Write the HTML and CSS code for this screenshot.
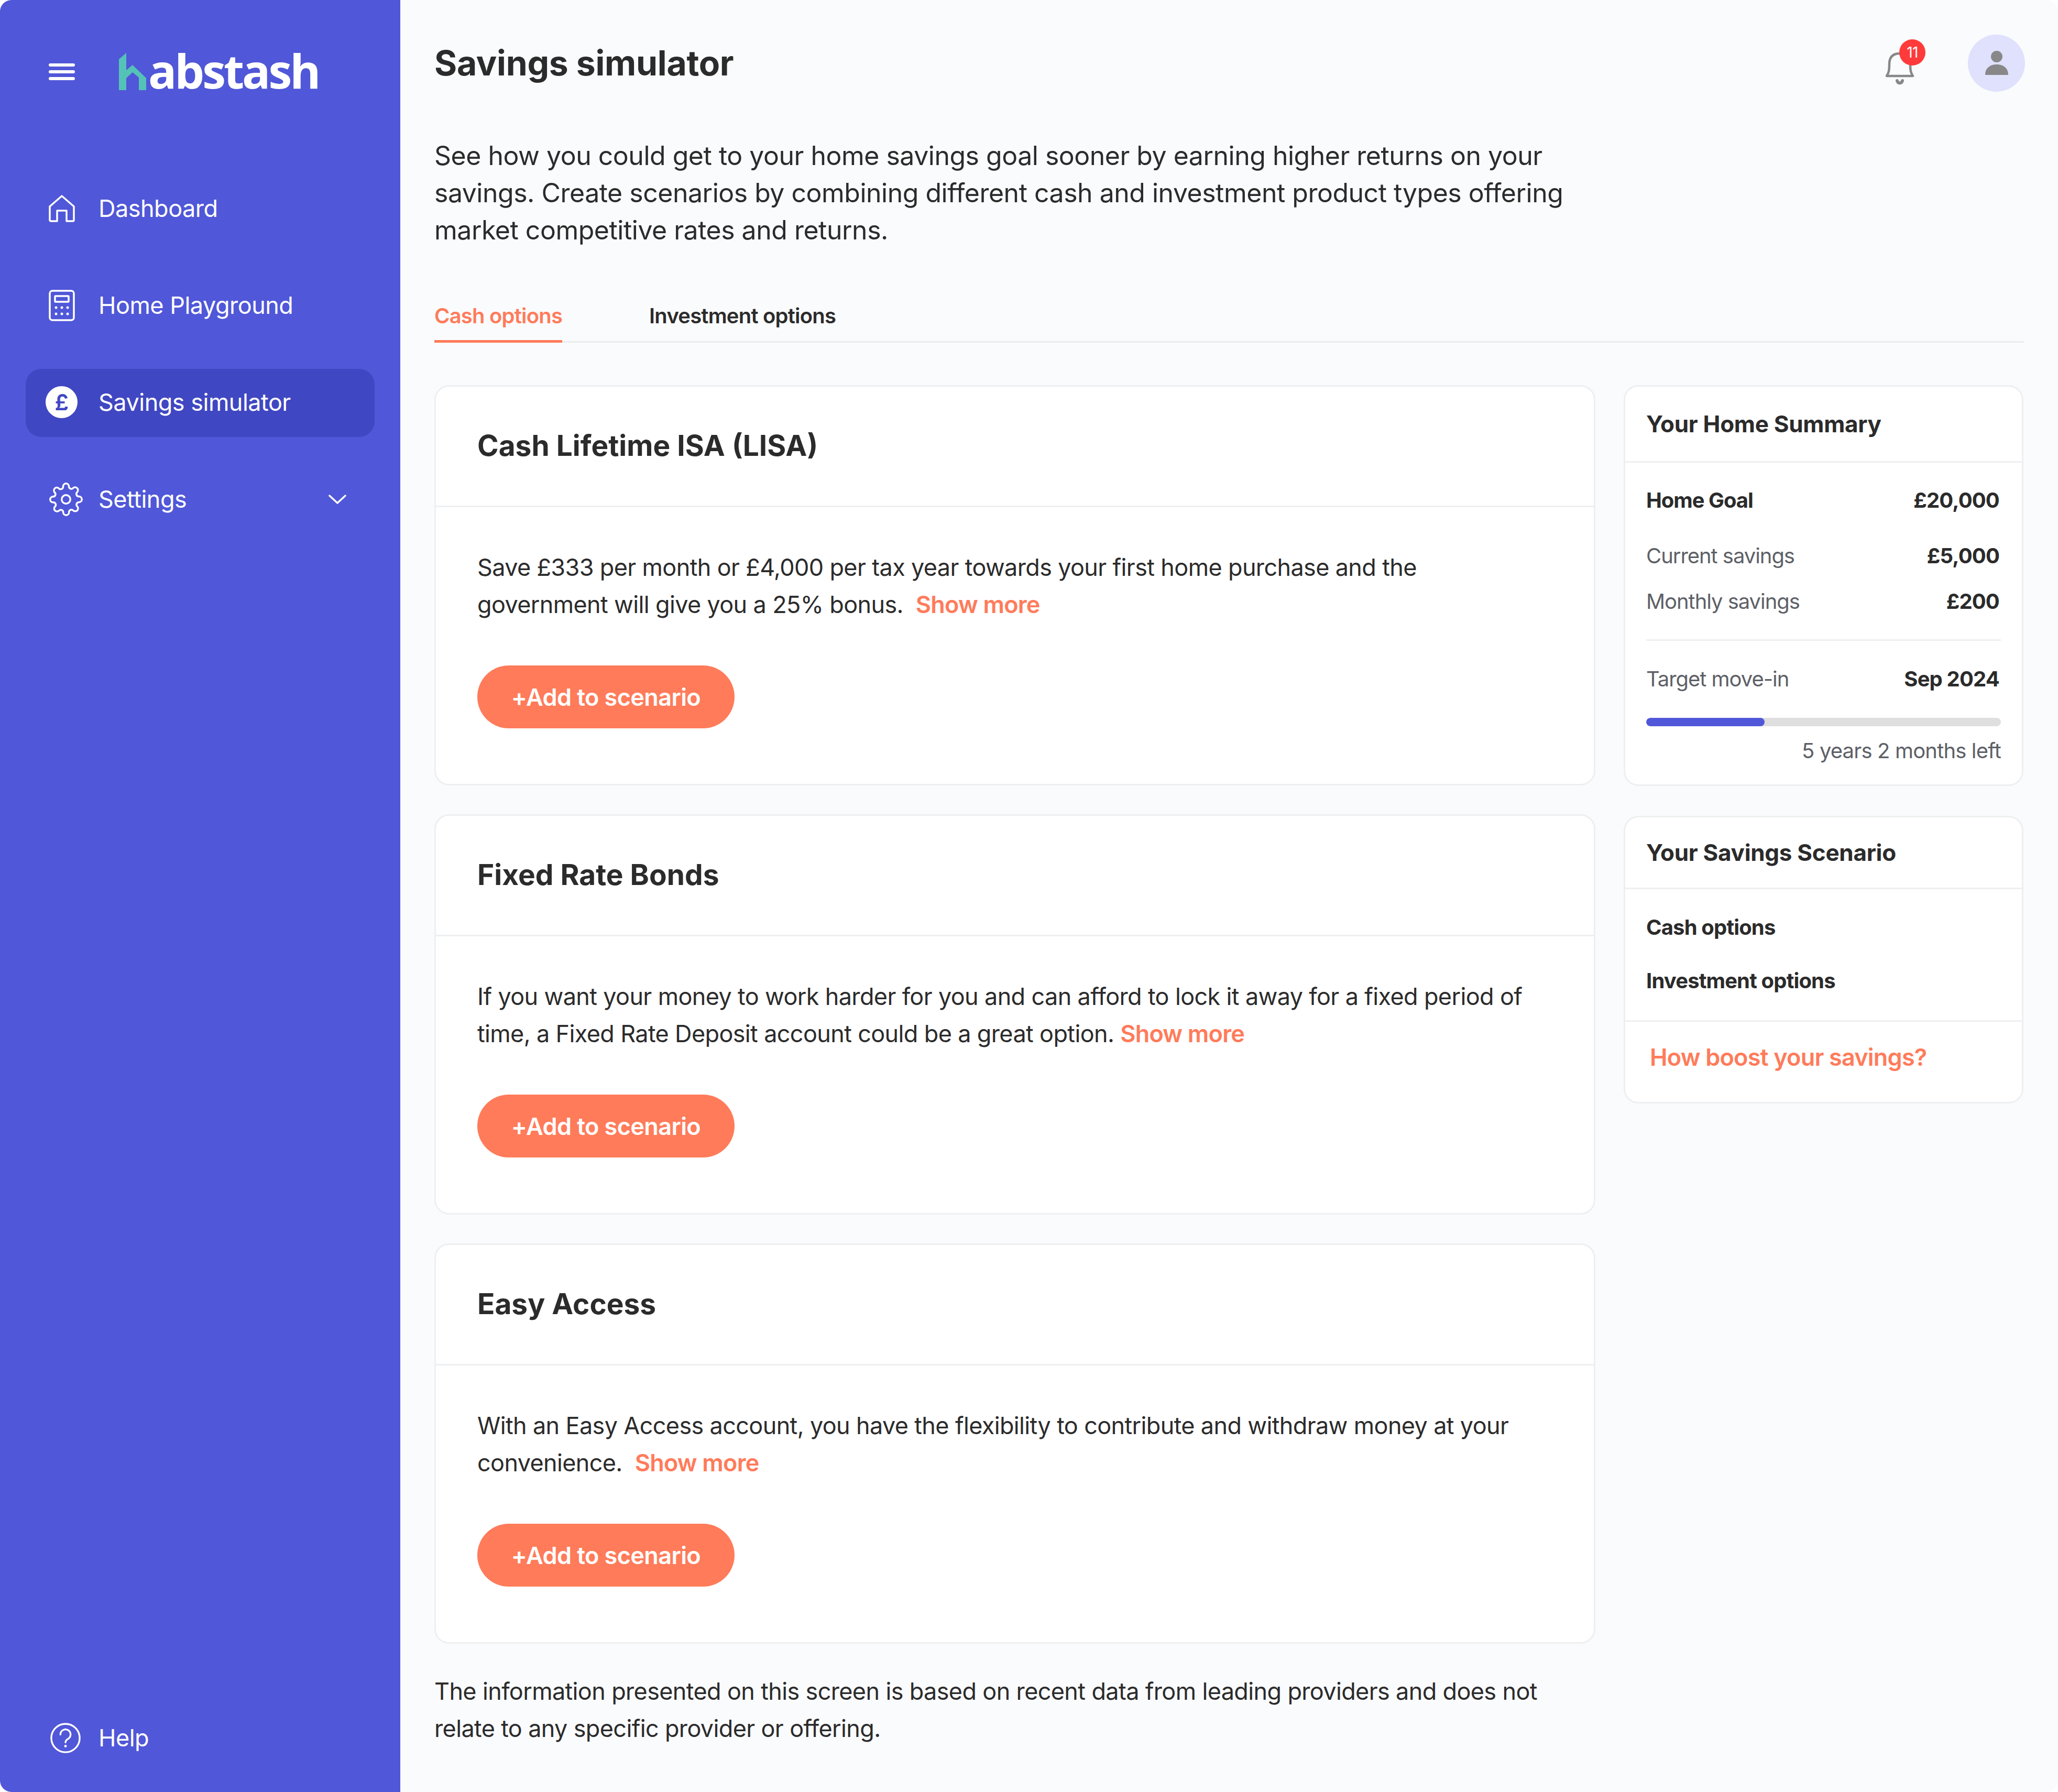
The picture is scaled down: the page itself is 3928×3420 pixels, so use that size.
FILE: index.html
```html
<!DOCTYPE html>
<html lang="en">
  <head>
    <meta charset="UTF-8" />
    <title>Savings simulator</title>
    <link rel="stylesheet" href="styles.css">
  </head>
  <body>
    <div class="app">
      <aside class="sidebar">
        <div class="brand">
          <svg class="burger" width="50" height="32" viewBox="0 0 50 32" fill="#fff">
            <rect x="0" y="0" width="50" height="6" rx="3" />
            <rect x="0" y="13" width="50" height="6" rx="3" />
            <rect x="0" y="26" width="50" height="6" rx="3" />
          </svg>
          <div class="logo">
            <svg class="logo-mark" width="52" height="71" viewBox="0 0 52 71" fill="#55c2b8">
              <path d="M0 12 14 0V33L26 23 52 48V71H38V47L26 37 14 48V71H0Z" />
            </svg>
            <span class="logo-text">abstash</span>
          </div>
        </div>
        <nav class="nav">
          <a class="nav-item">
            <span class="nav-icon">
              <svg width="50" height="52" viewBox="0 0 50 52" fill="none" stroke="#fff" stroke-width="3.5" stroke-linejoin="round">
                <path d="M2 22 25 2 48 22V48A2 2 0 0 1 46 50H34V30H16V50H4A2 2 0 0 1 2 48Z" />
              </svg>
            </span>
            Dashboard
          </a>
          <a class="nav-item">
            <span class="nav-icon">
              <svg width="50" height="60" viewBox="0 0 50 60" fill="none" stroke="#fff" stroke-width="3.5">
                <rect x="2" y="2" width="46" height="56" rx="5" />
                <rect x="12" y="12" width="26" height="11" rx="1" />
                <g fill="#fff" stroke="none">
                  <circle cx="14" cy="34" r="2.5" /><circle cx="25" cy="34" r="2.5" /><circle cx="36" cy="34" r="2.5" />
                  <circle cx="14" cy="46" r="2.5" /><circle cx="25" cy="46" r="2.5" /><circle cx="36" cy="46" r="2.5" />
                </g>
              </svg>
            </span>
            Home Playground
          </a>
          <a class="nav-item active">
            <span class="nav-icon">
              <span class="pound">£</span>
            </span>
            Savings simulator
          </a>
          <a class="nav-item">
            <span class="nav-icon">
              <svg width="66" height="66" viewBox="0 0 24 24" fill="none" stroke="#fff" stroke-width="1.25" stroke-linecap="round" stroke-linejoin="round">
                <circle cx="12" cy="12" r="3" />
                <path d="M19.4 15a1.65 1.65 0 0 0 .33 1.82l.06.06a2 2 0 1 1-2.83 2.83l-.06-.06a1.65 1.65 0 0 0-2.82 1.17V21a2 2 0 1 1-4 0v-.09a1.65 1.65 0 0 0-2.82-1.14l-.06.06a2 2 0 1 1-2.83-2.83l.06-.06a1.65 1.65 0 0 0-1.17-2.82H3a2 2 0 1 1 0-4h.09a1.65 1.65 0 0 0 1.14-2.82l-.06-.06a2 2 0 1 1 2.83-2.83l.06.06a1.65 1.65 0 0 0 1.82.33H9a1.65 1.65 0 0 0 1-1.51V3a2 2 0 1 1 4 0v.09a1.65 1.65 0 0 0 2.82 1.14l.06-.06a2 2 0 1 1 2.83 2.83l-.06.06a1.65 1.65 0 0 0-.33 1.82V9a1.65 1.65 0 0 0 1.51 1H21a2 2 0 1 1 0 4h-.09a1.65 1.65 0 0 0-1.51 1Z" />
              </svg>
            </span>
            Settings
            <svg class="chevron" width="34" height="20" viewBox="0 0 34 20" fill="none" stroke="#fff" stroke-width="3.5" stroke-linecap="round" stroke-linejoin="round">
              <path d="M2 3 17 17 32 3" />
            </svg>
          </a>
        </nav>
        <a class="nav-item help">
          <span class="nav-icon">
            <svg class="help-icon" width="58" height="58" viewBox="0 0 60 60" fill="none" stroke="#fff" stroke-width="3.5" stroke-linecap="round">
              <circle cx="30" cy="30" r="28" />
              <path d="M20 23a10 10 0 1 1 15 8.700c-3 1.800-5 3.300-5 6.800" />
              <circle cx="30" cy="46" r="2.500" fill="#fff" stroke="none" />
            </svg>
          </span>
          Help
        </a>
      </aside>

      <main class="main">
        <header class="topbar">
          <h1>Savings simulator</h1>
          <div class="topbar-right">
            <div class="bell">
              <svg width="56" height="62" viewBox="0 0 56 62" fill="none" stroke="#888" stroke-width="4.500" stroke-linejoin="round">
                <path d="M3 45c4-6 5-11 5-22C8 9 15 2 28 2s20 7 20 21c0 11 1 16 5 22Z" />
                <path d="M23 54c1 6 9 6 10 0" stroke-width="6" stroke-linecap="round" />
              </svg>
              <span class="badge">11</span>
            </div>
            <div class="avatar">
              <svg width="46" height="46" viewBox="0 0 46 46" fill="#888">
                <ellipse cx="23" cy="11" rx="11" ry="11" />
                <path d="M1 46C1 33 10 26 23 26s22 7 22 20Z" />
              </svg>
            </div>
          </div>
        </header>

        <p class="intro">See how you could get to your home savings goal sooner by earning higher returns on your savings. Create scenarios by combining different cash and investment product types offering market competitive rates and returns.</p>

        <div class="tabs">
          <a class="tab active">Cash options</a>
          <a class="tab">Investment options</a>
        </div>

        <div class="columns">
          <section class="products">
            <article class="card product">
              <h2>Cash Lifetime ISA (LISA)</h2>
              <div class="product-body">
                <p>Save £333 per month or £4,000 per tax year towards your first home purchase and the government will give you a 25% bonus.&nbsp; <a class="more">Show more</a></p>
                <button class="add">+Add to scenario</button>
              </div>
            </article>
            <article class="card product">
              <h2>Fixed Rate Bonds</h2>
              <div class="product-body">
                <p>If you want your money to work harder for you and can afford to lock it away for a fixed period of time, a Fixed Rate Deposit account could be a great option. <a class="more">Show more</a></p>
                <button class="add">+Add to scenario</button>
              </div>
            </article>
            <article class="card product">
              <h2>Easy Access</h2>
              <div class="product-body">
                <p>With an Easy Access account, you have the flexibility to contribute and withdraw money at your convenience.&nbsp; <a class="more">Show more</a></p>
                <button class="add">+Add to scenario</button>
              </div>
            </article>
            <p class="disclaimer">The information presented on this screen is based on recent data from leading providers and does not relate to any specific provider or offering.</p>
          </section>

          <aside class="side">
            <div class="card summary">
              <h3>Your Home Summary</h3>
              <div class="summary-body">
                <div class="row goal"><span>Home Goal</span><b>£20,000</b></div>
                <div class="row first"><span>Current savings</span><b>£5,000</b></div>
                <div class="row second"><span>Monthly savings</span><b>£200</b></div>
                <hr />
                <div class="row"><span>Target move-in</span><b>Sep 2024</b></div>
                <div class="progress"><div class="progress-fill" style="width: 33.4%"></div></div>
                <div class="left">5 years 2 months left</div>
              </div>
            </div>
            <div class="card scenario">
              <h3>Your Savings Scenario</h3>
              <div class="scenario-body">
                <div>Cash options</div>
                <div>Investment options</div>
              </div>
              <a class="boost">How boost your savings?</a>
            </div>
          </aside>
        </div>
      </main>
    </div>
  </body>
</html>
```

FILE: styles.css
```css
* {
  box-sizing: border-box;
}

body {
  margin: 0;
  background: #fff;
  font-family: Inter, "Liberation Sans", sans-serif;
  color: #2b2b2b;
  letter-spacing: -0.58px;
}

h1, h2, h3, p {
  margin: 0;
}

.app {
  display: flex;
  width: 3928px;
  height: 3420px;
  border-radius: 22px;
  overflow: hidden;
  background: #fafbfd;
}

/* sidebar */
.sidebar {
  display: flex;
  flex-direction: column;
  width: 764px;
  flex: none;
  background: #5057d8;
  color: #fff;
}

.brand {
  display: flex;
  align-items: flex-start;
  height: 334px;
  padding: 101px 0 0 93px;
}

.burger {
  margin-top: 20px;
}

.logo {
  display: flex;
  align-items: flex-end;
  margin-left: 84px;
  height: 71px;
}

.logo-mark {
  flex: none;
}

.logo-text {
  position: relative;
  top: -2px;
  margin-left: 4px;
  font-family: "Open Sans", sans-serif;
  font-weight: 700;
  font-size: 90px;
  line-height: 71px;
  letter-spacing: -4px;
  color: #fff;
}

.nav {
  display: flex;
  flex-direction: column;
  gap: 55px;
}

.nav-item {
  display: flex;
  align-items: center;
  width: 666px;
  height: 130px;
  margin-left: 49px;
  padding: 0 54px 3px 44px;
  border-radius: 30px;
  font-size: 45px;
  letter-spacing: -0.5px;
  color: #fff;
}

.nav-item.active {
  background: #4047c2;
}

.nav-icon {
  display: flex;
  align-items: center;
  width: 95px;
  flex: none;
}

.pound {
  display: flex;
  align-items: center;
  justify-content: center;
  width: 61px;
  height: 61px;
  margin-left: -6px;
  border-radius: 50%;
  background: #fff;
  color: #4047c2;
  font-size: 42px;
  font-weight: 600;
}

.chevron {
  margin-left: auto;
}

.help {
  margin-top: auto;
  margin-bottom: 37px;
}

.help-icon {
  margin-left: 3px;
}

/* main column */
.main {
  flex: 1;
  padding: 0 65px;
}

.topbar {
  display: flex;
  align-items: center;
  justify-content: space-between;
  height: 240px;
}

h1 {
  font-size: 66px;
  font-weight: 700;
  letter-spacing: -0.3px;
}

.topbar-right {
  display: flex;
  align-items: center;
  gap: 102px;
  margin-right: -2px;
}

.bell {
  position: relative;
  display: flex;
  margin-top: 22px;
}

.badge {
  position: absolute;
  top: -25px;
  left: 27px;
  width: 50px;
  height: 50px;
  border-radius: 50%;
  background: #ff3a3a;
  color: #fff;
  font-size: 28px;
  line-height: 50px;
  text-align: center;
}

.avatar {
  display: flex;
  align-items: center;
  justify-content: center;
  width: 109px;
  height: 109px;
  border-radius: 50%;
  background: #dfe1fd;
}

.intro {
  max-width: 2200px;
  margin-top: 22px;
  font-size: 50px;
  line-height: 71px;
  letter-spacing: -0.5px;
}

.tabs {
  display: flex;
  gap: 166px;
  height: 79px;
  margin-top: 100px;
  border-bottom: 3px solid #ebedf0;
}

.tab {
  height: 79px;
  padding-top: 4px;
  font-size: 40px;
  font-weight: 600;
  line-height: 48px;
  letter-spacing: -0.8px;
}

.tab.active {
  color: #ff7b5a;
  border-bottom: 5px solid #ff7b5a;
}

.columns {
  display: grid;
  grid-template-columns: 2216px 763px;
  gap: 54px;
  margin-top: 81px;
  align-items: start;
}

.card {
  background: #fff;
  border: 3px solid #eeeff1;
  border-radius: 28px;
}

.products {
  display: flex;
  flex-direction: column;
  gap: 55px;
}

.product h2 {
  display: flex;
  align-items: center;
  height: 230px;
  padding: 0 79px 4px;
  border-bottom: 3px solid #eeeff1;
  font-size: 55px;
  font-weight: 700;
  letter-spacing: 0;
}

.product-body {
  padding: 79px 79px 106px;
}

.product-body p {
  font-size: 45px;
  line-height: 71px;
  letter-spacing: -0.65px;
}

.more {
  color: #ff7b5a;
  font-weight: 600;
  letter-spacing: -0.8px;
}

.add {
  display: block;
  width: 491px;
  height: 120px;
  margin-top: 81px;
  border: 0;
  border-radius: 60px;
  background: #ff7b5a;
  color: #fff;
  font-family: inherit;
  font-size: 45px;
  font-weight: 600;
  letter-spacing: -0.6px;
}

.disclaimer {
  font-size: 45px;
  line-height: 71px;
  letter-spacing: -0.65px;
}

.side {
  display: flex;
  flex-direction: column;
  gap: 57px;
}

.side h3 {
  display: flex;
  align-items: center;
  padding: 0 40px;
  font-size: 44px;
  font-weight: 700;
  letter-spacing: -0.3px;
  border-bottom: 3px solid #eeeff1;
}

.summary h3 {
  height: 145px;
}

.summary-body {
  padding: 41px 40px 39px 40px;
  font-size: 40px;
  letter-spacing: -0.85px;
  color: #5d6066;
}

.row {
  display: flex;
  justify-content: space-between;
  align-items: center;
  height: 60px;
  padding-right: 3px;
}

.row span {
  letter-spacing: -1.05px;
}

.row b {
  font-weight: 700;
  color: #2b2b2b;
}

.goal {
  margin-bottom: 46px;
  font-weight: 700;
  color: #2b2b2b;
}

.first {
  margin-bottom: 27px;
}

.summary hr {
  height: 3px;
  margin: 43px 0 42px;
  border: 0;
  background: #eeeff1;
}

.progress {
  height: 16px;
  margin-top: 45px;
  border-radius: 8px;
  background: #dfdfdf;
  overflow: hidden;
}

.progress-fill {
  height: 100%;
  border-radius: 8px;
  background: #5057d8;
}

.left {
  margin-top: 22px;
  line-height: 50px;
  text-align: right;
}

.scenario h3 {
  height: 137px;
}

.scenario-body {
  display: flex;
  flex-direction: column;
  gap: 52px;
  padding: 48px 40px 50px;
  border-bottom: 3px solid #eeeff1;
  font-size: 40px;
  font-weight: 700;
  letter-spacing: -0.85px;
  line-height: 50px;
}

.boost {
  display: block;
  padding: 40px 47px 58px;
  color: #ff7b5a;
  font-size: 45px;
  font-weight: 600;
  letter-spacing: -0.8px;
  line-height: 55px;
}
```
